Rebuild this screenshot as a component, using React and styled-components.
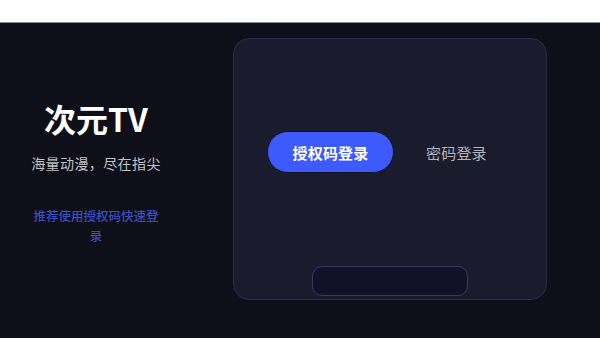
import React from 'react'
import { useState } from 'react'
import styled, { createGlobalStyle } from 'styled-components'

const GlobalStyle = createGlobalStyle`
  html, body {
    margin: 0;
    padding: 0;
    background: #ffffff;
    font-family: "Noto Sans CJK SC", "Noto Sans", sans-serif;
  }
`

const TopStrip = styled.div`
  height: 22px;
  background: #ffffff;
  border-bottom: 1px solid #8a8a8a;
`

const Screen = styled.div`
  display: flex;
  height: 315px;
  background: #0f0f19;
  overflow: hidden;
`

const Intro = styled.div`
  width: 192px;
  display: flex;
  flex-direction: column;
  align-items: center;
  padding-top: 75px;
  box-sizing: border-box;
`

const Title = styled.div`
  font-size: 32px;
  line-height: 40px;
  font-weight: 600;
  color: #ffffff;
`

const Slogan = styled.div`
  margin-top: 15px;
  font-size: 14px;
  line-height: 20px;
  letter-spacing: 0.4px;
  color: #c2c2c8;
`

const Hint = styled.div`
  margin-top: 33px;
  width: 132px;
  font-size: 12.5px;
  line-height: 20px;
  font-weight: 500;
  text-align: center;
  color: #3a4cc2;
`

const LoginCard = styled.div`
  margin: 15px 0 0 41px;
  width: 314px;
  height: 262px;
  box-sizing: border-box;
  background: #1b1b2e;
  border: 1px solid #2d2a4c;
  border-radius: 16px;
  display: flex;
  flex-direction: column;
  padding: 92px 0 3px 33px;
`

const Tabs = styled.div`
  display: flex;
  align-items: center;
  gap: 32px;
`

const Tab = styled.div`
  height: 42px;
  box-sizing: border-box;
  display: flex;
  align-items: center;
  justify-content: center;
  font-size: 15px;
  letter-spacing: 0.2px;
  cursor: pointer;
  ${({ active }) => active ? `
    width: 127px;
    border-radius: 21px;
    background: #3d5afe;
    border: 1px solid #15152a;
    color: #ffffff;
    font-weight: 700;
  ` : `
    color: #b4b4bc;
    font-weight: 400;
  `}
`

const CodeBox = styled.div`
  margin-top: auto;
  margin-left: -33px;
  align-self: center;
  width: 156px;
  height: 30px;
  box-sizing: border-box;
  border-radius: 10px;
  background: #12112a;
  border: 1px solid #3b3866;
`

const App = () => {
  const [tab, setTab] = useState('code')
  return (
    <>
      <GlobalStyle />
      <TopStrip />
      <Screen>
        <Intro>
          <Title>次元TV</Title>
          <Slogan>海量动漫，尽在指尖</Slogan>
          <Hint>推荐使用授权码快速登录</Hint>
        </Intro>
        <LoginCard>
          <Tabs>
            <Tab active={tab === 'code'} onClick={() => setTab('code')}>授权码登录</Tab>
            <Tab active={tab === 'password'} onClick={() => setTab('password')}>密码登录</Tab>
          </Tabs>
          <CodeBox />
        </LoginCard>
      </Screen>
    </>
  )
}

export default App
